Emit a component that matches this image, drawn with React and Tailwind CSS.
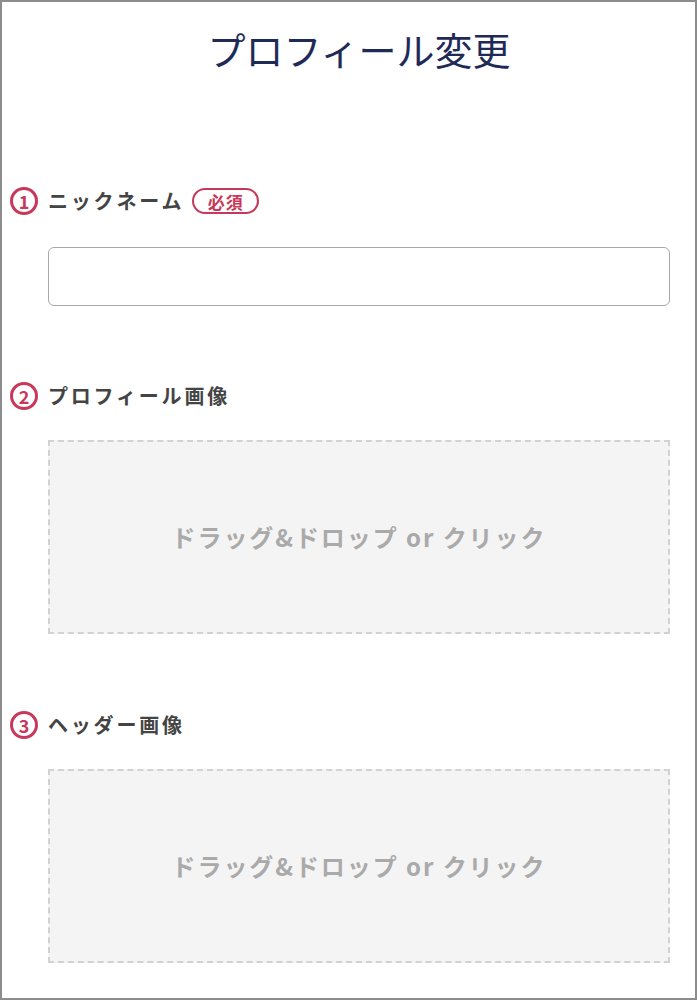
import React from "react";

const font = { fontFamily: '"Noto Sans CJK JP", "Noto Sans", sans-serif' };

function Num({ n }) {
  return (
    <div className="flex h-[28px] w-[28px] shrink-0 items-center justify-center rounded-full border-[3px] border-[#c8385a] text-[18px] font-bold leading-none text-[#c8385a]">
      {n}
    </div>
  );
}

function Label({ n, children, required }) {
  return (
    <div className="flex h-[28px] items-center">
      <Num n={n} />
      <span className="ml-[10px] text-[20px] font-bold leading-[28px] tracking-[0.14em] text-[#444]">
        {children}
      </span>
      {required && (
        <span className="ml-[8px] flex h-[26px] w-[67px] items-center justify-center rounded-full border-2 border-[#c8385a] text-[17px] font-bold leading-none tracking-[0.06em] text-[#c8385a]">
          必須
        </span>
      )}
    </div>
  );
}

function DropZone() {
  return (
    <div className="ml-[38px] flex h-[194px] w-[622px] items-center justify-center border-2 border-dashed border-[#d2d2d2] bg-[#f4f4f4]">
      <span className="text-[24px] font-bold tracking-[0.08em] text-[#aaaaaa]">
        ドラッグ&ドロップ or クリック
      </span>
    </div>
  );
}

export default function App() {
  return (
    <div
      className="box-border flex h-[1000px] w-[697px] flex-col overflow-hidden border-2 border-[#8c8c8c] bg-white pl-[8px]"
      style={font}
    >
      <div className="ml-[38px] w-[622px] pt-[18px] text-center text-[38px] leading-[57px] text-[#1f2b57]">
        プロフィール変更
      </div>
      <div className="mt-[110px]">
        <Label n="1" required>
          ニックネーム
        </Label>
      </div>
      <div className="ml-[38px] mt-[32px] h-[59px] w-[622px] rounded-[6px] border border-[#a8a8a8]" />
      <div className="mt-[76px]">
        <Label n="2">プロフィール画像</Label>
      </div>
      <div className="mt-[30px]">
        <DropZone />
      </div>
      <div className="mt-[77px]">
        <Label n="3">ヘッダー画像</Label>
      </div>
      <div className="mt-[30px]">
        <DropZone />
      </div>
    </div>
  );
}
